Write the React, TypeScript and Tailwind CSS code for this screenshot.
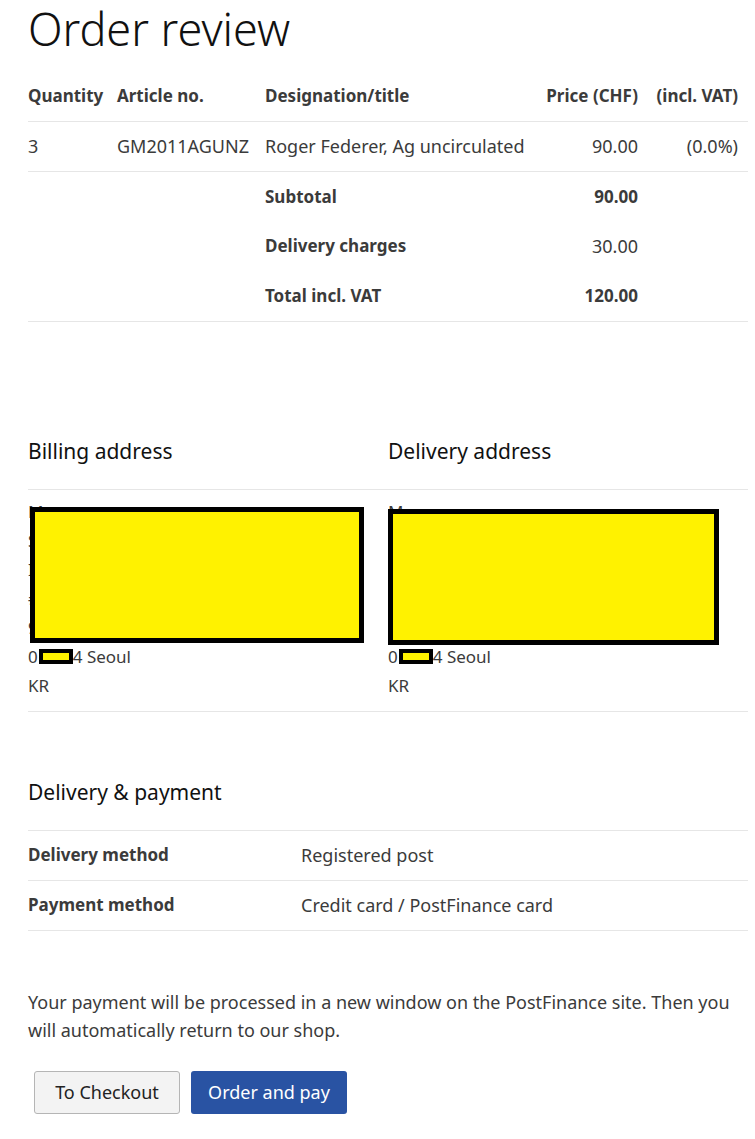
const font = { fontFamily: '"Noto Sans", "Open Sans", sans-serif' }

const Redacted = ({ className }: { className: string }) => (
    <div className={"absolute border-[5px] border-black bg-[#fff200] " + className} />
)

const SmallBox = () => (
    <span className="relative -top-[1px] ml-[1px] inline-block h-[15px] w-[34px] border-[4px] border-black bg-[#fff200] align-middle" />
)

const AddressBlock = ({ lines, bigBox }: { lines: string[], bigBox: string }) => (
    <div className="relative pb-[11px] pt-[7px] text-[17px] leading-[29px] text-[#3b3b3b]">
        {lines.map((l, i) => <div key={i}>{l}</div>)}
        <div>0<SmallBox />4 Seoul</div>
        <div>KR</div>
        <Redacted className={bigBox} />
    </div>
)

const App = () => {
    const cell = "h-[50px] align-middle"
    return <div className="min-h-screen bg-white pl-7 pr-[7px]" style={font}>
        <h1 className="pt-[1px] text-[45px] font-light leading-[56px] text-[#111]">Order review</h1>

        <table className="mt-[14px] w-full border-collapse text-[18px] text-[#3b3b3b]">
            <thead>
                <tr className="border-b border-[#e6e6e6] text-[17px] font-bold">
                    <td className={cell + " w-[89px]"}>Quantity</td>
                    <td className={cell + " w-[148px]"}>Article no.</td>
                    <td className={cell}>Designation/title</td>
                    <td className={cell + " text-right"}>Price (CHF)</td>
                    <td className={cell + " w-[110px] pr-[10px] text-right"}>(incl. VAT)</td>
                </tr>
            </thead>
            <tbody>
                <tr className="border-b border-[#e6e6e6]">
                    <td className={cell}>3</td>
                    <td className={cell}>GM2011AGUNZ</td>
                    <td className={cell}>Roger Federer, Ag uncirculated</td>
                    <td className={cell + " text-right"}>90.00</td>
                    <td className={cell + " pr-[10px] text-right"}>(0.0%)</td>
                </tr>
                <tr>
                    <td className={cell} colSpan={2} />
                    <td className={cell + " text-[17px] font-bold"}>Subtotal</td>
                    <td className={cell + " text-right text-[17px] font-bold"}>90.00</td>
                    <td className={cell} />
                </tr>
                <tr>
                    <td className={cell} colSpan={2} />
                    <td className={cell + " text-[17px] font-bold"}>Delivery charges</td>
                    <td className={cell + " text-right"}>30.00</td>
                    <td className={cell} />
                </tr>
                <tr className="border-b border-[#e6e6e6]">
                    <td className={cell} colSpan={2} />
                    <td className={cell + " text-[17px] font-bold"}>Total incl. VAT</td>
                    <td className={cell + " text-right text-[17px] font-bold"}>120.00</td>
                    <td className={cell} />
                </tr>
            </tbody>
        </table>

        <div className="mt-[99px] grid grid-cols-2 border-b border-[#e6e6e6]">
            <h3 className="h-[69px] border-b border-[#e6e6e6] pt-[16px] text-[21px] leading-[28px] text-[#111]">Billing address</h3>
            <h3 className="h-[69px] border-b border-[#e6e6e6] pt-[16px] text-[21px] leading-[28px] text-[#111]">Delivery address</h3>
            <AddressBlock
                lines={["M", "S", "I", "#", "9"]}
                bigBox="left-[2px] top-[17px] h-[136px] w-[334px]"
            />
            <AddressBlock
                lines={["M", "\u00a0", "\u00a0", "\u00a0", "\u00a0"]}
                bigBox="left-0 top-[19px] h-[136px] w-[331px]"
            />
        </div>

        <h3 className="mt-[61px] h-[58px] border-b border-[#e6e6e6] text-[21px] leading-[38px] text-[#111]">Delivery &amp; payment</h3>
        <div className="text-[18px] text-[#3b3b3b]">
            <div className="flex h-[50px] items-center border-b border-[#e6e6e6]">
                <div className="w-[273px] text-[17px] font-bold">Delivery method</div>
                <div>Registered post</div>
            </div>
            <div className="flex h-[50px] items-center border-b border-[#e6e6e6]">
                <div className="w-[273px] text-[17px] font-bold">Payment method</div>
                <div>Credit card / PostFinance card</div>
            </div>
        </div>

        <p className="mt-[57px] pr-3 text-[18px] leading-[28px] text-[#3b3b3b]">
            Your payment will be processed in a new window on the PostFinance site. Then you will automatically return to our shop.
        </p>

        <div className="mt-[27px] flex gap-[11px] pl-[6px]">
            <button className="h-[43px] w-[146px] rounded-[3px] border border-[#b5b5b5] bg-[#f3f3f3] text-[18px] text-[#222]">To Checkout</button>
            <button className="h-[43px] w-[156px] rounded-[3px] bg-[#2953a3] text-[18px] text-white">Order and pay</button>
        </div>
    </div>
}

export default App
